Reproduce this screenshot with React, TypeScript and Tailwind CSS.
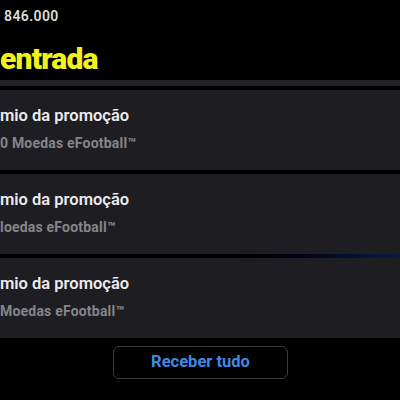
import React from "react";

const rewards = [
  { title: "mio da promoção", sub: "0 Moedas eFootball™" },
  { title: "mio da promoção", sub: "loedas eFootball™" },
  { title: "mio da promoção", sub: "Moedas eFootball™" },
];

const RewardCard = ({ title, sub }: { title: string; sub: string }) => {
  return (
    <div className="h-[80px] bg-[#1e1d22] flex flex-col pt-[16px]">
      <div className="text-[16.5px] font-semibold text-[#ebebeb] leading-5">{title}</div>
      <div className="text-[14px] font-bold text-[#85858a] leading-4 mt-[9px] tracking-[0.2px]">{sub}</div>
    </div>
  );
};

export default function App() {
  return (
    <div
      className="w-[400px] h-[400px] bg-black overflow-hidden flex flex-col"
      style={{ fontFamily: "Roboto, 'Noto Sans', sans-serif" }}
    >
      <div className="h-[30px] pl-1 pt-[6px] text-[14px] font-semibold text-[#dcdcdc] tracking-[0.4px]">846.000</div>
      <div className="h-[50px] flex items-center pt-[7px]">
        <span className="text-[30px] font-black text-[#f2f21a] tracking-[-0.8px] leading-none">entrada</span>
      </div>
      <div className="h-[6px] bg-[#232325]" />
      <div className="h-[4px] bg-black" />
      <RewardCard {...rewards[0]} />
      <div className="h-[4px] bg-black" />
      <RewardCard {...rewards[1]} />
      <div className="h-[4px] bg-gradient-to-r from-black via-black to-[#0c1a4a]" />
      <RewardCard {...rewards[2]} />
      <div className="flex justify-center pt-[8px] pl-[1px]">
        <button className="w-[175px] h-[33px] rounded-md border border-[#3c3c40] text-[16.5px] font-bold text-[#3f8ae6]">
          Receber tudo
        </button>
      </div>
    </div>
  );
}
